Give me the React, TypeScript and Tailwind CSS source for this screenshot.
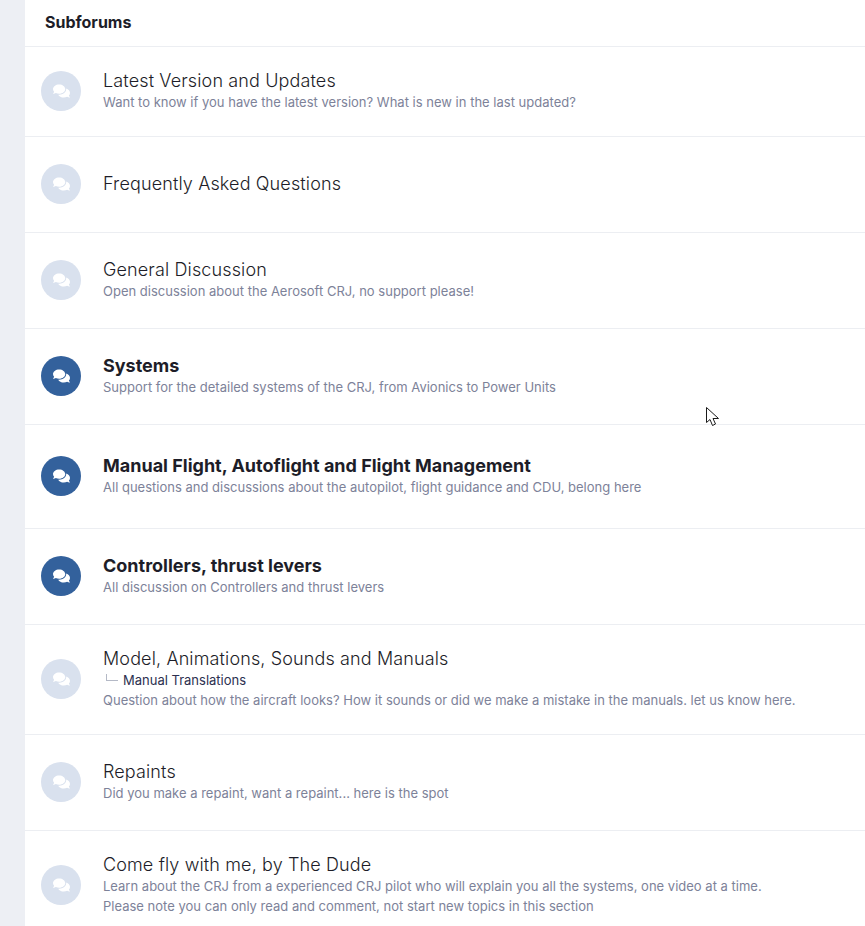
import { FaComments } from "react-icons/fa";

type Forum = {
  title: string;
  desc?: string[];
  unread?: boolean;
  sub?: string;
  height: string;
};

const forums: Forum[] = [
  { title: "Latest Version and Updates", desc: ["Want to know if you have the latest version? What is new in the last updated?"], height: "h-[90px]" },
  { title: "Frequently Asked Questions", height: "h-[96px]" },
  { title: "General Discussion", desc: ["Open discussion about the Aerosoft CRJ, no support please!"], height: "h-[96px]" },
  { title: "Systems", desc: ["Support for the detailed systems of the CRJ, from Avionics to Power Units"], unread: true, height: "h-[96px]" },
  { title: "Manual Flight, Autoflight and Flight Management", desc: ["All questions and discussions about the autopilot, flight guidance and CDU, belong here"], unread: true, height: "h-[104px]" },
  { title: "Controllers, thrust levers", desc: ["All discussion on Controllers and thrust levers"], unread: true, height: "h-[96px]" },
  { title: "Model, Animations, Sounds and Manuals", sub: "Manual Translations", desc: ["Question about how the aircraft looks? How it sounds or did we make a mistake in the manuals. let us know here."], height: "h-[110px]" },
  { title: "Repaints", desc: ["Did you make a repaint, want a repaint... here is the spot"], height: "h-[96px]" },
  { title: "Come fly with me, by The Dude", desc: ["Learn about the CRJ from a experienced CRJ pilot who will explain you all the systems, one video at a time.", "Please note you can only read and comment, not start new topics in this section"], height: "h-[110px]" },
];

function ForumRow({ forum }: { forum: Forum }) {
  return (
    <li className={`flex shrink-0 items-center border-b border-[#eceef2] pb-[2px] pl-4 ${forum.height}`}>
      <div className={`flex h-10 w-10 shrink-0 items-center justify-center rounded-full text-white ${forum.unread ? "bg-[#33619c]" : "bg-[#d9e1ee]"}`}>
        <FaComments className="h-4 w-[17px]" />
      </div>
      <div className="ml-[22px] min-w-0">
        <h3 className={`text-[18px] leading-[22px] text-[#1d1d28] ${forum.unread ? "font-bold" : "font-light tracking-[0.13px]"}`}>{forum.title}</h3>
        {forum.sub && (
          <div className="flex h-5 items-center pt-[2px] text-[13px] text-[#2c3050]">
            <span className="mb-[6px] ml-[3px] mr-[5px] h-[7px] w-[12px] border-b border-l border-[#b4b9c6]" />
            {forum.sub}
          </div>
        )}
        {forum.desc?.map((line) => (
          <p key={line} className="text-[13px] leading-[20px] tracking-[0.006px] text-[#7d8299]">{line}</p>
        ))}
      </div>
    </li>
  );
}

export default function App() {
  return (
    <div className="relative h-[926px] w-[865px] overflow-hidden bg-[#edeff4] font-['Inter',sans-serif]">
      <div className="ml-[25px] h-full bg-white">
        <h2 className="flex h-[47px] items-center border-b border-[#eceef2] pb-[2px] pl-5 text-[16px] font-bold text-[#1d1d28]">Subforums</h2>
        <ul className="flex flex-col">
          {forums.map((forum) => (
            <ForumRow key={forum.title} forum={forum} />
          ))}
        </ul>
      </div>
      <svg className="absolute left-[706px] top-[407px]" width="14" height="20" viewBox="0 0 14 20">
        <path d="M0.5 0.5V15.5L4 12.5L6.5 18.5L9.5 17L7 11.5H12.5Z" fill="white" stroke="#1a1a1a" strokeWidth="1" strokeLinejoin="miter" />
      </svg>
    </div>
  );
}
